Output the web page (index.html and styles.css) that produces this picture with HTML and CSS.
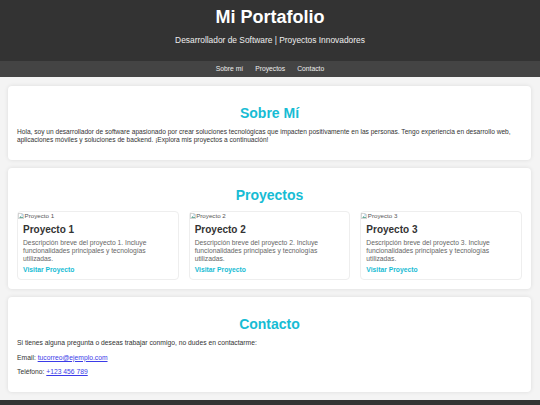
FILE: index.html
```html
<!DOCTYPE html>
<html lang="es">
<head>
<meta charset="utf-8">
<title>Mi Portafolio</title>
<link rel="stylesheet" href="styles.css">
</head>
<body>
<header class="site-header">
  <h1 class="site-title">Mi Portafolio</h1>
  <p class="site-subtitle">Desarrollador de Software | Proyectos Innovadores</p>
</header>
<nav class="site-nav">
  <a href="#sobre">Sobre mí</a>
  <a href="#proyectos">Proyectos</a>
  <a href="#contacto">Contacto</a>
</nav>
<main class="main">
  <section class="card" id="sobre">
    <h2 class="card-title">Sobre Mí</h2>
    <p class="text">Hola, soy un desarrollador de software apasionado por crear soluciones tecnológicas que impacten positivamente en las personas. Tengo experiencia en desarrollo web, aplicaciones móviles y soluciones de backend. ¡Explora mis proyectos a continuación!</p>
  </section>
  <section class="card" id="proyectos">
    <h2 class="card-title">Proyectos</h2>
    <div class="projects">
      <article class="project">
        <div class="img-alt"><svg class="broken" viewBox="0 0 8 8"><path d="M0.5 0.5h5l2 2v5h-7z" fill="#fff" stroke="#999" stroke-width="0.6"/><path d="M1.5 6.5l2-2.5 1.5 1.5 1-1 1 2z" fill="#6a9"/><circle cx="5.5" cy="2.5" r="0.8" fill="#59c"/></svg>Proyecto 1</div>
        <div class="project-body">
          <h3 class="project-title">Proyecto 1</h3>
          <p class="project-desc">Descripción breve del proyecto 1. Incluye funcionalidades principales y tecnologías utilizadas.</p>
          <a class="project-link" href="#">Visitar Proyecto</a>
        </div>
      </article>
      <article class="project">
        <div class="img-alt"><svg class="broken" viewBox="0 0 8 8"><path d="M0.5 0.5h5l2 2v5h-7z" fill="#fff" stroke="#999" stroke-width="0.6"/><path d="M1.5 6.5l2-2.5 1.5 1.5 1-1 1 2z" fill="#6a9"/><circle cx="5.5" cy="2.5" r="0.8" fill="#59c"/></svg>Proyecto 2</div>
        <div class="project-body">
          <h3 class="project-title">Proyecto 2</h3>
          <p class="project-desc">Descripción breve del proyecto 2. Incluye funcionalidades principales y tecnologías utilizadas.</p>
          <a class="project-link" href="#">Visitar Proyecto</a>
        </div>
      </article>
      <article class="project">
        <div class="img-alt"><svg class="broken" viewBox="0 0 8 8"><path d="M0.5 0.5h5l2 2v5h-7z" fill="#fff" stroke="#999" stroke-width="0.6"/><path d="M1.5 6.5l2-2.5 1.5 1.5 1-1 1 2z" fill="#6a9"/><circle cx="5.5" cy="2.5" r="0.8" fill="#59c"/></svg>Proyecto 3</div>
        <div class="project-body">
          <h3 class="project-title">Proyecto 3</h3>
          <p class="project-desc">Descripción breve del proyecto 3. Incluye funcionalidades principales y tecnologías utilizadas.</p>
          <a class="project-link" href="#">Visitar Proyecto</a>
        </div>
      </article>
    </div>
  </section>
  <section class="card" id="contacto">
    <h2 class="card-title">Contacto</h2>
    <p class="text">Si tienes alguna pregunta o deseas trabajar conmigo, no dudes en contactarme:</p>
    <p class="text">Email: <a class="link" href="#">tucorreo@ejemplo.com</a></p>
    <p class="text">Teléfono: <a class="link" href="#">+123 456 789</a></p>
  </section>
</main>
<footer class="site-footer"></footer>
</body>
</html>
```
FILE: styles.css
```css
* { box-sizing: border-box; }
html, body { margin: 0; padding: 0; }
body {
  background: #f4f4f4;
  font-family: "Liberation Sans", Arial, sans-serif;
  color: #333;
  font-size: 6.75px;
  line-height: 8px;
}
.site-header {
  background: #333;
  color: #fff;
  text-align: center;
  padding: 7px 0 15px;
}
.site-title {
  margin: 0;
  font-size: 18px;
  line-height: 21px;
  font-weight: bold;
}
.site-subtitle {
  margin: 7px 0 0;
  font-size: 8.4px;
  line-height: 11px;
  color: #eee;
}
.site-nav {
  background: #444;
  height: 16px;
  display: flex;
  justify-content: center;
  gap: 12px;
  align-items: center;
}
.site-nav a {
  color: #eee;
  text-decoration: none;
  font-size: 6.75px;
  line-height: 16px;
}
.main {
  padding: 9px 9px 8px 8px;
  display: flex;
  flex-direction: column;
  gap: 8px;
}
.card {
  background: #fff;
  border-radius: 4px;
  box-shadow: 0 0 4px rgba(0,0,0,0.1);
  padding: 9px;
}
.card-title {
  margin: 10px 0 7px;
  text-align: center;
  color: #17bcd4;
  font-size: 14px;
  line-height: 16px;
  font-weight: bold;
}
.text {
  margin: 7px 0;
}
#sobre .text { margin-bottom: 7px; font-size: 6.6px; }
#contacto .text { margin: 6.5px 0; }
.link { color: #3b3be8; }
.projects {
  display: grid;
  grid-template-columns: repeat(3, 1fr);
  gap: 10px;
  margin-top: 8px;
}
.project {
  border: 1px solid #eee;
  border-radius: 4px;
  background: #fff;
}
.img-alt {
  display: flex;
  align-items: center;
  font-size: 6.2px;
  line-height: 8px;
  color: #555;
}
.broken { width: 6px; height: 6px; margin-right: 0.5px; }
.project-body {
  padding: 0 5px 5px;
}
.project-title {
  margin: 3px 0 3px;
  font-size: 10px;
  line-height: 13px;
  font-weight: bold;
  color: #333;
}
.project-desc {
  margin: 0 0 3px;
  color: #666;
}
.project-link {
  color: #17bcd4;
  font-weight: bold;
  text-decoration: none;
}
.site-footer {
  background: #333;
  height: 20px;
}
```
